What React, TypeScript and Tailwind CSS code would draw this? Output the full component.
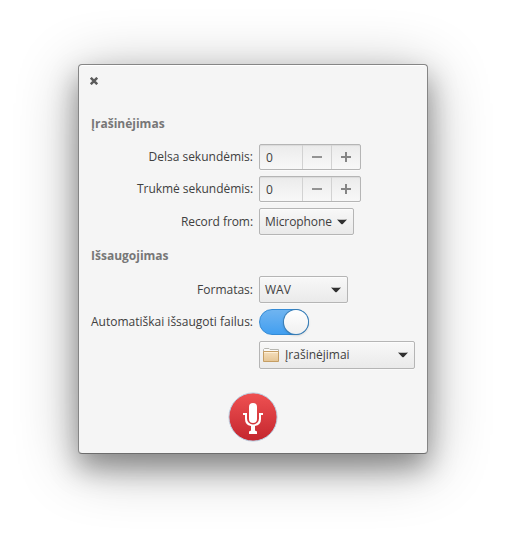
import React from "react";

const fieldBase = "box-border rounded-[2px] border border-[#b5b5b5]";

function Label({ children }: { children: React.ReactNode }) {
  return <span className="w-[175px] shrink-0 pr-[6px] text-right whitespace-nowrap">{children}</span>;
}

function SpinButton() {
  return (
    <div className={`${fieldBase} flex h-[26px] w-[102px] bg-linear-to-b from-[#ebebeb] to-[#f8f8f8] shadow-[inset_0_1px_1px_#00000012,0_1px_0_#ffffff80]`}>
      <span className="w-[42px] pl-[6px] leading-[25px]">0</span>
      <span className="flex w-[29px] items-center justify-center border-l border-[#d2d2d2]">
        <svg width="10" height="10" viewBox="0 0 10 10" shapeRendering="crispEdges"><path d="M0 4h10v2H0z" fill="#939393" /></svg>
      </span>
      <span className="flex w-[29px] items-center justify-center border-l border-[#d2d2d2]">
        <svg width="10" height="10" viewBox="0 0 10 10" shapeRendering="crispEdges"><path d="M0 4h4V0h2v4h4v2H6v4H4V6H0z" fill="#858585" /></svg>
      </span>
    </div>
  );
}

function Arrow() {
  return (
    <svg width="10" height="6" viewBox="0 0 10 6"><path d="M0 .5Q5 1 10 .5L5.8 5Q5 5.7 4.2 5Z" fill="#303030" /></svg>
  );
}

const comboFill = "bg-linear-to-b from-[#f8f8f8] to-[#eaeaea] shadow-[inset_0_1px_0_#ffffff90,0_1px_0_#ffffff80]";

export default function App() {
  return (
    <main className="flex h-[546px] w-[506px] items-start overflow-hidden bg-white pt-[64px] pl-[78px] font-['Open_Sans','Noto_Sans',sans-serif] text-[12px] leading-4 text-[#404040]">
      <section className="box-border flex h-[390px] w-[350px] flex-col rounded-[4px] border border-[#858585] border-b-[#6d6d6d] bg-[#f5f5f5] pl-[12px] shadow-[inset_0_1px_0_#ffffff,0_14px_28px_rgba(0,0,0,0.35),0_10px_62px_rgba(0,0,0,0.3)]">
        <header className="h-[51px] pt-[12px]">
          <svg width="8" height="8" viewBox="0 0 8 8" className="-ml-px"><path d="M.8.8l6.400 6.400M7.200.8L.8 7.200" stroke="#5b5b5b" strokeWidth="2.500" /></svg>
        </header>
        <h2 className="h-[28px] font-bold text-[#777]">Įrašinėjimas</h2>
        <div className="-ml-[7px] flex h-[32px] items-start leading-[25px]"><Label>Delsa sekundėmis:</Label><SpinButton /></div>
        <div className="-ml-[7px] flex h-[32px] items-start leading-[25px]"><Label><span className="tracking-[-0.04px]">Trukmė sekundėmis:</span></Label><SpinButton /></div>
        <div className="-ml-[7px] flex h-[40px] items-start leading-[27px]">
          <Label><span className="tracking-[-0.07px]">Record from:</span></Label>
          <div className={`${fieldBase} ${comboFill} flex h-[27px] w-[95px] items-center justify-between pr-[6px] pl-[5px] leading-[25px] tracking-[-0.08px]`}>Microphone<Arrow /></div>
        </div>
        <h2 className="h-[28px] font-bold text-[#777]">Išsaugojimas</h2>
        <div className="-ml-[7px] flex h-[33px] items-start leading-[27px]">
          <Label>Formatas:</Label>
          <div className={`${fieldBase} ${comboFill} flex h-[27px] w-[89px] items-center justify-between pr-[6px] pl-[5px] leading-[25px]`}>WAV<Arrow /></div>
        </div>
        <div className="-ml-[7px] flex h-[32px] items-start leading-[25px]">
          <Label>Automatiškai išsaugoti failus:</Label>
          <div className="box-border flex h-[26px] w-[50px] justify-end rounded-full border border-[#348bd6] bg-linear-to-b from-[#6fb4f0] to-[#419ff0]">
            <span className="h-[24px] w-[24px] rounded-full bg-linear-to-b from-white to-[#f0f0f0] shadow-[0_0_0_1px_#3a7db3,0_1px_3px_#00000045]" />
          </div>
        </div>
        <div className="flex h-[51px] items-start pl-[168px]">
          <div className={`${fieldBase} ${comboFill} flex h-[28px] w-[156px] items-center pr-[6px] pl-[3px] leading-[26px]`}>
            <svg width="16" height="16" viewBox="0 0 16 16">
              <defs><linearGradient id="folder" x2="0" y2="1"><stop stopColor="#f5dfbd" /><stop offset="1" stopColor="#e5c594" /></linearGradient></defs>
              <path d="M.5 5V2.500l1-1h4.500l1 1h8.500V5" fill="#fafafa" stroke="#b6b6b0" />
              <path d="M.5 4.500h15v10H.5z" fill="url(#folder)" stroke="#c59e64" />
              <path d="M1 5.500h14" stroke="#fff0d8" />
            </svg>
            <span className="ml-[6px]">Įrašinėjimai</span>
            <span className="ml-auto flex"><Arrow /></span>
          </div>
        </div>
        <div className="ml-[137px] h-[50px] w-[50px]">
          <svg width="50" height="50" viewBox="0 0 50 50">
            <defs><linearGradient id="record" x2="0" y2="1"><stop stopColor="#ef5152" /><stop offset="1" stopColor="#c4262e" /></linearGradient></defs>
            <circle cx="25" cy="25" r="24.1" fill="url(#record)" stroke="#b9d1e4" />
            <rect x="21" y="11" width="8" height="20" rx="4" fill="#fff" />
            <path d="M15 21h4v5.500a6 6 0 0 0 12 0V21h4v2h-2v4q0 6-6 7v4.500l2 1V42h-8v-2.500l2-1V34q-6-1-6-7v-4h-2z" fill="#fff" />
          </svg>
        </div>
      </section>
    </main>
  );
}
